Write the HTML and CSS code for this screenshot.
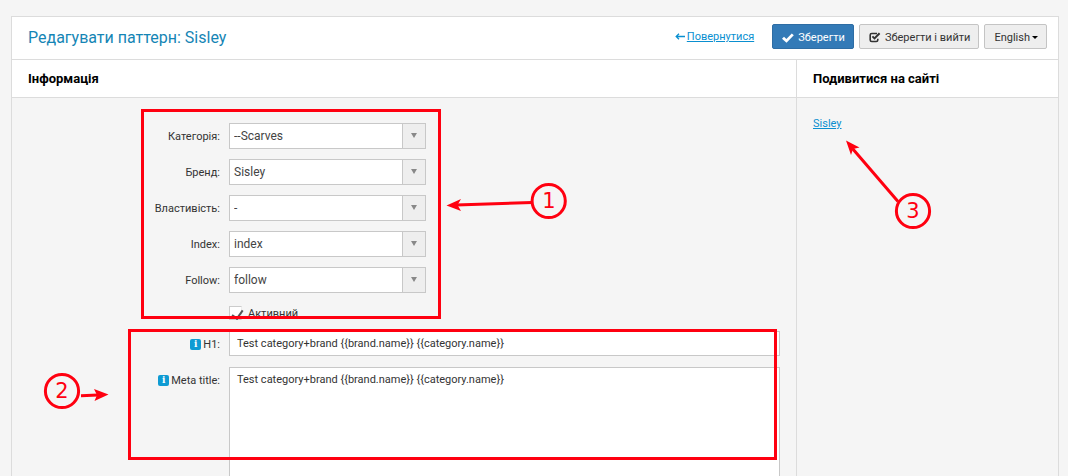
FILE: index.html
```
<!DOCTYPE html>
<html lang="uk">
<head>
  <title>Редагувати паттерн: Sisley</title>
  <meta charset="UTF-8">
  <link rel="stylesheet" href="styles.css">
</head>
<body>
  <div class="panel">
    <header class="panel-header">
      <h1>Редагувати паттерн: Sisley</h1>
      <div class="back"><svg class="back-arrow" width="10" height="7" viewBox="0 0 10 7"><path d="M10 3.5H1M4 .8L1.2 3.5L4 6.2" fill="none" stroke="#0a8fd0" stroke-width="1.3"/></svg><a href="#">Повернутися</a></div>
      <div class="actions">
        <button type="submit" form="patternForm" class="btn btn-primary">
          <svg width="12" height="10" viewBox="0 0 12 10"><path d="M0 5.8L2 3.7L4.4 6L9.8 .4L11.8 2.3L4.5 9.8Z" fill="#fff"/></svg>
          Зберегти
        </button>
        <button type="submit" form="patternForm" class="btn">
          <svg width="12" height="11" viewBox="0 0 12 11"><path d="M8 1.5H2.8Q1.2 1.5 1.2 3.1V7.9Q1.2 9.5 2.8 9.5H7.2Q8.8 9.5 8.8 7.9V6.8" fill="none" stroke="#333" stroke-width="1.6"/><path d="M3.4 4.4L5.5 6.4L10.6 1.3" fill="none" stroke="#333" stroke-width="2"/></svg>
          Зберегти і вийти
        </button>
        <button type="button" class="btn btn-lang">English<span class="caret"></span></button>
      </div>
    </header>

    <div class="columns">
      <main class="main">
        <h2>Інформація</h2>
        <form id="patternForm" class="form">
          <label for="category">Категорія:</label>
          <div class="select">
            <select id="category"><option>--Scarves</option></select>
          </div>

          <label for="brand">Бренд:</label>
          <div class="select">
            <select id="brand"><option>Sisley</option></select>
          </div>

          <label for="property">Властивість:</label>
          <div class="select">
            <select id="property"><option>-</option></select>
          </div>

          <label for="index">Index:</label>
          <div class="select">
            <select id="index"><option>index</option></select>
          </div>

          <label for="follow">Follow:</label>
          <div class="select">
            <select id="follow"><option>follow</option></select>
          </div>

          <div class="check">
            <input type="checkbox" id="active" checked>
            <label for="active">Активний</label>
          </div>

          <label for="h1"><span class="info">i</span>H1:</label>
          <input type="text" id="h1" class="field" value="Test category+brand {{brand.name}} {{category.name}}">

          <label for="metaTitle"><span class="info">i</span>Meta title:</label>
          <textarea id="metaTitle" class="field">Test category+brand {{brand.name}} {{category.name}}</textarea>
        </form>
      </main>

      <aside class="side">
        <h2>Подивитися на сайті</h2>
        <div class="side-body"><a href="#">Sisley</a></div>
      </aside>
    </div>
  </div>

  <!-- callouts over the form -->
  <svg class="callouts" width="1068" height="476" viewBox="0 0 1068 476">
    <g fill="none" stroke="#ff0010" stroke-width="3">
      <rect x="142.500" y="110.500" width="297" height="207"/>
      <rect x="129.500" y="330.500" width="646" height="128"/>
      <circle cx="548.700" cy="201" r="16.600"/>
      <circle cx="62" cy="391" r="16.600"/>
      <circle cx="913" cy="211" r="16.600"/>
      <path d="M532 202.500L456 205M81 395.700L98 395M898 201.500L852 148"/>
    </g>
    <g fill="#ff0010">
      <path d="M446.500 205.500L461 199L457.500 205L461 211Z"/>
      <path d="M108.500 394.500L94 389L97 395L94.500 401Z"/>
      <path d="M846 140.500L859.500 147.500L853 149L851 155Z"/>
      <text x="549" y="208">1</text>
      <text x="62" y="398">2</text>
      <text x="913" y="218">3</text>
    </g>
  </svg>
</body>
</html>
```

FILE: styles.css
```
* {
  box-sizing: border-box;
}

body {
  margin: 0;
  padding: 16px 9px 0 11px;
  height: 100vh;
  overflow: hidden;
  position: relative;
  background-color: #f5f5f5;
  color: #333;
  font: 11px/16px Roboto, "Liberation Sans", sans-serif;
}

a {
  color: #0a8fd0;
}

.panel {
  border: 1px solid #dcdcdc;
}

.panel-header {
  display: flex;
  align-items: flex-start;
  height: 43px;
  padding: 7px 11px 0 16px;
  border-bottom: 1px solid #dcdcdc;
  background-color: #fff;
}

h1 {
  flex: 1;
  margin: 0;
  color: #1585b5;
  font-size: 16px;
  font-weight: 400;
  line-height: 28px;
}

.back {
  margin-right: 18px;
  line-height: 25px;
}

.back-arrow {
  margin-right: 2px;
}

.actions {
  display: flex;
  gap: 5px;
}

.btn {
  display: flex;
  align-items: center;
  gap: 4px;
  height: 25px;
  padding: 2px 8px 0 9px;
  border: 1px solid #c4c4c4;
  border-radius: 2px;
  background-color: #eee;
  color: #333;
  font: inherit;
  cursor: pointer;
}

.btn-primary {
  border-color: #2e6da4;
  background-color: #337ab7;
  color: #fff;
}

.btn-lang {
  gap: 2px;
}

.caret {
  border: 3px solid transparent;
  border-top-color: #000;
  border-bottom: 0;
}

.columns {
  display: flex;
}

.main {
  flex: 1;
}

.side {
  width: 262px;
  border-left: 1px solid #dcdcdc;
}

h2 {
  height: 38px;
  margin: 0;
  padding-left: 16px;
  border-bottom: 1px solid #dcdcdc;
  background-color: #fff;
  color: #000;
  font-size: 13px;
  font-weight: 700;
  line-height: 38px;
}

.side-body {
  padding: 18px 16px;
}

.form {
  display: grid;
  grid-template-columns: 208px 1fr;
  gap: 10px 9px;
  padding: 25px 16px 25px 0;
}

.form > label {
  height: 26px;
  padding-top: 1px;
  text-align: right;
  line-height: 26px;
}

.select {
  position: relative;
  width: 197px;
  height: 26px;
}

.select select {
  appearance: none;
  width: 100%;
  height: 100%;
  padding: 0 28px 0 4px;
  border: 1px solid #c8c8c8;
  border-radius: 0;
  background: linear-gradient(#c8c8c8, #c8c8c8) right 22px top / 1px 100% no-repeat,
    linear-gradient(#eee, #eee) right top / 22px 100% no-repeat #fff;
  color: #444;
  font: inherit;
  font-size: 12px;
}

.select::after {
  content: '';
  position: absolute;
  top: 10px;
  right: 9px;
  border: 3px solid transparent;
  border-top: 5px solid #888;
  border-bottom: 0;
  pointer-events: none;
}

.check {
  grid-column: 2;
  display: flex;
  align-items: flex-start;
  gap: 6px;
  height: 18px;
  padding-top: 3px;
}

.check input {
  appearance: none;
  width: 13px;
  height: 14px;
  margin: 0;
  border: 1px solid #ccc;
  border-right-color: #eee;
  background-color: #fff;
}

.check input:checked::after {
  content: '';
  display: block;
  width: 5px;
  height: 9px;
  margin: 1px 0 0 4px;
  border: solid #555;
  border-width: 0 2px 2px 0;
  transform: rotate(35deg);
}

.field {
  width: 100%;
  height: 25px;
  margin: 0;
  padding: 0 7px;
  border: 1px solid #c8c8c8;
  background-color: #fff;
  color: #333;
  font: inherit;
}

textarea.field {
  display: block;
  height: 130px;
  padding-top: 4px;
  resize: none;
}

.info {
  display: inline-block;
  width: 11px;
  height: 11px;
  margin-right: 2px;
  border-radius: 2px;
  background-color: #0f9bd3;
  color: #fff;
  font: bold 9px/11px "DejaVu Serif", serif;
  text-align: center;
  vertical-align: 1px;
}

.callouts {
  position: absolute;
  top: 0;
  left: 0;
  pointer-events: none;
}

.callouts text {
  font: 21px "DejaVu Sans", sans-serif;
  text-anchor: middle;
}
```
